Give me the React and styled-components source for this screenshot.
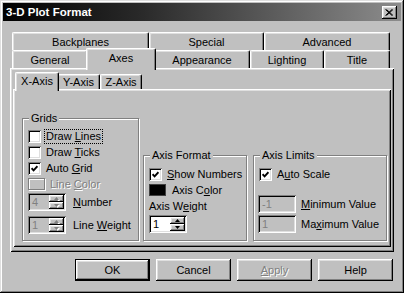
import React from 'react';
import styled, { createGlobalStyle } from 'styled-components';

// tab rows, back row first
const backTabs = [
    { label: 'Backplanes', w: 137 },
    { label: 'Special', w: 115 },
    { label: 'Advanced', w: 126 }
];
const frontTabs = [
    { label: 'General', w: 76 },
    { label: 'Axes', w: 66, active: true },
    { label: 'Appearance', w: 96 },
    { label: 'Lighting', w: 74 },
    { label: 'Title', w: 66 }
];
const axisTabs = [
    { label: 'X-Axis', w: 40, active: true },
    { label: 'Y-Axis', w: 43 },
    { label: 'Z-Axis', w: 42 }
];

const raised = `
    box-shadow: inset -1px -1px #000, inset 1px 1px #fff, inset -2px -2px #808080, inset 2px 2px #dfdfdf;
`;
const sunken = `
    box-shadow: inset 1px 1px #808080, inset -1px -1px #fff, inset 2px 2px #000, inset -2px -2px #dfdfdf;
`;

const GlobalStyle = createGlobalStyle`
    html, body {
        margin: 0;
        padding: 0;
        background: #c0c0c0;
    }
    body {
        font-family: "Liberation Sans", Arial, sans-serif;
        font-size: 11px;
        color: #000;
    }
`;

const Check = () => (
    <svg width="7" height="7" viewBox="0 0 7 7">
        <polyline points="0.6,3.2 2.6,5.4 6.4,1.2" fill="none" stroke="#000" strokeWidth="1.8" />
    </svg>
);

const Arrow = ({ up, disabled }) => (
    <svg width="5" height="3" viewBox="0 0 5 3" style={{ overflow: 'visible' }}>
        {disabled && <polygon points={up ? '3.5,4 6,4 4.75,1.5' : '1.5,1 6,1 3.75,4'} fill="#fff" />}
        <polygon points={up ? '0,3 5,3 2.5,0' : '0,0 5,0 2.5,3'} fill={disabled ? '#808080' : '#000'} />
    </svg>
);

const App = () => (
    <>
        <GlobalStyle />
        <Window>
            <TitleBar>
                <TitleText>3-D Plot Format</TitleText>
                <CloseButton>
                    <svg width="8" height="7" viewBox="0 0 8 7">
                        <path d="M0.5 0.5 L7 6.5 M1.5 0.5 L8 6.5 M7 0.5 L0.5 6.5 M8 0.5 L1.5 6.5" stroke="#000" strokeWidth="1" />
                    </svg>
                </CloseButton>
            </TitleBar>

            <Body>
                <TabRow $h={18} $pl={2}>
                    {backTabs.map(t => (
                        <Tab key={t.label} $w={t.w} $h={18}>{t.label}</Tab>
                    ))}
                </TabRow>
                <TabRow $h={18} $pl={2}>
                    {frontTabs.map(t => (
                        <Tab key={t.label} $w={t.w} $h={18} $active={t.active}>{t.label}</Tab>
                    ))}
                </TabRow>

                <Panel>
                    <TabRow $h={15} $pl={4}>
                        {axisTabs.map(t => (
                            <Tab key={t.label} $w={t.w} $h={15} $active={t.active}>{t.label}</Tab>
                        ))}
                    </TabRow>

                    <InnerPanel>
                        {/* Grids */}
                        <Group $w={117} $h={123}>
                            <Legend>Grids</Legend>
                            <Row>
                                <Box />
                                <Label $focus>Draw <u>L</u>ines</Label>
                            </Row>
                            <Row>
                                <Box />
                                <Label>Draw <u>T</u>icks</Label>
                            </Row>
                            <Row>
                                <Box><Check /></Box>
                                <Label>Auto <u>G</u>rid</Label>
                            </Row>
                            <Row>
                                <Swatch $disabled />
                                <Label $disabled>Line <u>C</u>olor</Label>
                            </Row>
                            <Row $h={18} $mt={1} $gap={7}>
                                <Spin value="4" disabled />
                                <Label><u>N</u>umber</Label>
                            </Row>
                            <Row $h={18} $mt={5} $gap={7}>
                                <Spin value="1" disabled />
                                <Label>Line <u>W</u>eight</Label>
                            </Row>
                        </Group>

                        {/* Axis Format */}
                        <Group $w={104} $h={86} $pt={10}>
                            <Legend>Axis Format</Legend>
                            <Row>
                                <Box><Check /></Box>
                                <Label><u>S</u>how Numbers</Label>
                            </Row>
                            <Row $gap={6}>
                                <Swatch $color="#000" />
                                <Label>Axis C<u>o</u>lor</Label>
                            </Row>
                            <Text>Axis W<u>e</u>ight</Text>
                            <Row $h={18} $mt={2}>
                                <Spin value="1" />
                            </Row>
                        </Group>

                        {/* Axis Limits */}
                        <Group $w={134} $h={86} $pt={10} $pl={4}>
                            <Legend>Axis Limits</Legend>
                            <Row $ml={1}>
                                <Box><Check /></Box>
                                <Label>A<u>u</u>to Scale</Label>
                            </Row>
                            <Row $h={18} $mt={13}>
                                <Edit>-1</Edit>
                                <Label><u>M</u>inimum Value</Label>
                            </Row>
                            <Row $h={18} $mt={2}>
                                <Edit>1</Edit>
                                <Label>Ma<u>x</u>imum Value</Label>
                            </Row>
                        </Group>
                    </InnerPanel>
                </Panel>

                <ButtonRow>
                    <Button $default>OK</Button>
                    <Button>Cancel</Button>
                    <Button $disabled><u>A</u>pply</Button>
                    <Button>Help</Button>
                </ButtonRow>
            </Body>
        </Window>
    </>
);

const Spin = ({ value, disabled }) => (
    <SpinBox $disabled={disabled}>
        <SpinValue $disabled={disabled}>{value}</SpinValue>
        <SpinButtons>
            <SpinBtn><Arrow up disabled={disabled} /></SpinBtn>
            <SpinBtn><Arrow disabled={disabled} /></SpinBtn>
        </SpinButtons>
    </SpinBox>
);

// 창 외곽
const Window = styled.div`
    box-sizing: border-box;
    width: 404px;
    height: 293px;
    padding: 3px;
    background: #c0c0c0;
    display: flex;
    flex-direction: column;
    box-shadow: inset -1px -1px #000, inset 1px 1px #dfdfdf, inset -2px -2px #808080, inset 2px 2px #fff;
`;

const TitleBar = styled.div`
    flex: none;
    height: 18px;
    display: flex;
    align-items: center;
    padding-left: 3px;
    background: linear-gradient(to right, #000 0%, #2a2a2a 35%, #8c8c8c 100%);
`;

const TitleText = styled.span`
    color: #fff;
    font-weight: bold;
    font-size: 11.5px;
    white-space: nowrap;
`;

const CloseButton = styled.div`
    margin-left: auto;
    margin-right: 4px;
    width: 15px;
    height: 13px;
    background: #c0c0c0;
    display: flex;
    align-items: center;
    justify-content: center;
    padding-right: 1px;
    box-sizing: border-box;
    ${raised}
`;

const Body = styled.div`
    display: flex;
    flex-direction: column;
    padding: 11px 7px 0;
`;

const TabRow = styled.div`
    display: flex;
    align-items: flex-start;
    height: ${p => p.$h}px;
    padding-left: ${p => p.$pl}px;
`;

const Tab = styled.div`
    position: relative;
    z-index: ${p => (p.$active ? 2 : 1)};
    flex: none;
    box-sizing: border-box;
    width: ${p => p.$w + (p.$active ? 4 : 0)}px;
    height: ${p => p.$h + (p.$active ? 4 : 0)}px;
    margin: ${p => (p.$active ? '-2px -2px 0' : '0')};
    padding-bottom: ${p => (p.$active ? 3 : 0)}px;
    display: flex;
    align-items: center;
    justify-content: center;
    background: #c0c0c0;
    border-top: 1px solid #fff;
    border-left: 1px solid #fff;
    border-right: 1px solid #000;
    border-radius: 2px 2px 0 0;
    box-shadow: inset -1px 0 #808080, inset 1px 1px #dfdfdf;
    white-space: nowrap;
`;

// 바깥 탭 패널
const Panel = styled.div`
    box-sizing: border-box;
    height: 184px;
    padding: 6px 3px 0;
    display: flex;
    flex-direction: column;
    box-shadow: inset 1px 1px #fff, inset -1px -1px #000, inset 2px 2px #dfdfdf, inset -2px -2px #808080;
`;

const InnerPanel = styled.div`
    box-sizing: border-box;
    height: 158px;
    display: flex;
    align-items: flex-end;
    padding: 0 0 6px 9px;
    box-shadow: inset 1px 1px #fff, inset -1px -1px #000, inset 2px 2px #dfdfdf, inset -2px -2px #808080;
    & > div + div { margin-left: 4px; }
    & > div:last-child { margin-left: 6px; }
`;

const Group = styled.div`
    position: relative;
    flex: none;
    box-sizing: border-box;
    width: ${p => p.$w}px;
    height: ${p => p.$h}px;
    padding: ${p => p.$pt ?? 9}px 0 0 ${p => p.$pl ?? 5}px;
    border: 1px solid #808080;
    box-shadow: inset 1px 1px #fff, 1px 1px #fff;
    display: flex;
    flex-direction: column;
`;

const Legend = styled.span`
    position: absolute;
    top: -7px;
    left: 6px;
    padding: 0 2px;
    line-height: 13px;
    background: #c0c0c0;
    white-space: nowrap;
`;

const Row = styled.div`
    display: flex;
    align-items: center;
    gap: ${p => p.$gap ?? 5}px;
    height: ${p => p.$h ?? 16}px;
    margin-top: ${p => p.$mt ?? 0}px;
    margin-left: ${p => p.$ml ?? 0}px;
    flex: none;
`;

const Box = styled.span`
    flex: none;
    box-sizing: border-box;
    width: 13px;
    height: 13px;
    background: #fff;
    display: flex;
    align-items: center;
    justify-content: center;
    ${sunken}
`;

const Label = styled.span`
    line-height: 13px;
    white-space: nowrap;
    padding: 0 1px;
    margin-left: -1px;
    outline: ${p => (p.$focus ? '1px dotted #000' : 'none')};
    color: ${p => (p.$disabled ? '#808080' : '#000')};
    text-shadow: ${p => (p.$disabled ? '1px 1px #fff' : 'none')};
`;

const Text = styled.div`
    line-height: 13px;
    margin-top: 2px;
    white-space: nowrap;
`;

const Swatch = styled.span`
    flex: none;
    box-sizing: border-box;
    width: 17px;
    height: 12px;
    background: ${p => p.$color || '#c0c0c0'};
    border: 1px solid ${p => (p.$disabled ? '#808080' : '#404040')};
    box-shadow: ${p => (p.$disabled ? 'inset 1px 1px #fff, 1px 1px #fff' : 'none')};
`;

const SpinBox = styled.div`
    flex: none;
    box-sizing: border-box;
    width: 38px;
    height: 18px;
    padding: 2px;
    display: flex;
    background: ${p => (p.$disabled ? '#c0c0c0' : '#fff')};
    ${sunken}
`;

const SpinValue = styled.span`
    flex: 1;
    padding-left: 2px;
    line-height: 14px;
    color: ${p => (p.$disabled ? '#808080' : '#000')};
`;

const SpinButtons = styled.div`
    display: flex;
    flex-direction: column;
    width: 15px;
`;

const SpinBtn = styled.div`
    flex: 1;
    background: #c0c0c0;
    display: flex;
    align-items: center;
    justify-content: center;
    ${raised}
`;

const Edit = styled.span`
    flex: none;
    box-sizing: border-box;
    width: 38px;
    height: 18px;
    padding-left: 4px;
    line-height: 18px;
    color: #808080;
    background: #c0c0c0;
    ${sunken}
`;

const ButtonRow = styled.div`
    display: flex;
    justify-content: flex-end;
    gap: 6px;
    margin-top: 7px;
    padding-right: 1px;
`;

const Button = styled.div`
    box-sizing: border-box;
    width: 75px;
    height: 22px;
    display: flex;
    align-items: center;
    justify-content: center;
    background: #c0c0c0;
    border: ${p => (p.$default ? '1px solid #000' : 'none')};
    color: ${p => (p.$disabled ? '#808080' : '#000')};
    text-shadow: ${p => (p.$disabled ? '1px 1px #fff' : 'none')};
    ${raised}
`;

export default App;
